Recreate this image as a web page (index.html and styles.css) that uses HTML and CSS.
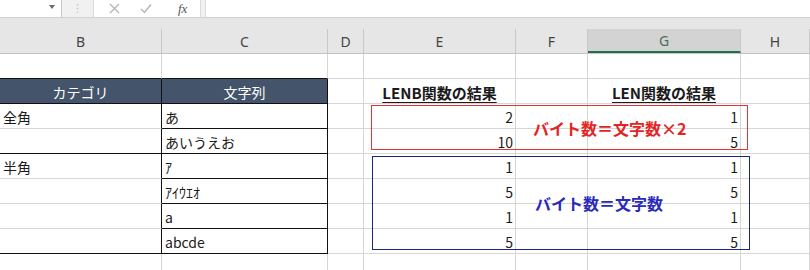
FILE: index.html
```html
<!DOCTYPE html>
<html lang="ja">
<head>
  <meta charset="UTF-8">
  <meta name="viewport" content="width=device-width, initial-scale=1.0">
  <title>LENB関数とLEN関数</title>
  <link rel="stylesheet" href="styles.css">
</head>
<body>
  <!-- Formula Bar -->
  <div class="formula-bar">
    <div class="name-box"><span class="drop"></span></div>
    <div class="grip"><span>⋮</span></div>
    <div class="fx-buttons">
      <svg class="icon" width="11" height="11" viewBox="0 0 11 11"><path d="M1 1 L10 10 M10 1 L1 10" stroke="#b4b4b4" stroke-width="1.3" fill="none"/></svg>
      <svg class="icon" width="12" height="11" viewBox="0 0 12 11"><path d="M1 6 L4.5 9.5 L11 1.5" stroke="#b4b4b4" stroke-width="1.4" fill="none"/></svg>
      <span class="fx">fx</span>
    </div>
    <div class="formula-input"></div>
  </div>

  <!-- Column Headers -->
  <div class="col-heads">
    <div class="col-head">B</div>
    <div class="col-head">C</div>
    <div class="col-head">D</div>
    <div class="col-head">E</div>
    <div class="col-head">F</div>
    <div class="col-head selected">G</div>
    <div class="col-head">H</div>
  </div>

  <!-- Sheet -->
  <div class="sheet">
    <!-- row 1 -->
    <div class="cell bb"></div>
    <div class="cell bb"></div>
    <div class="cell"></div>
    <div class="cell"></div>
    <div class="cell"></div>
    <div class="cell"></div>
    <div class="cell"></div>

    <!-- row 2: headers -->
    <div class="cell head bb br">カテゴリ</div>
    <div class="cell head bb br">文字列</div>
    <div class="cell"></div>
    <div class="cell title"><u>LENB関数の結果</u></div>
    <div class="cell"></div>
    <div class="cell title"><u>LEN関数の結果</u></div>
    <div class="cell"></div>

    <!-- row 3 -->
    <div class="cell br">全角</div>
    <div class="cell bb br">あ</div>
    <div class="cell"></div>
    <div class="cell num">2</div>
    <div class="cell"></div>
    <div class="cell num">1</div>
    <div class="cell"></div>

    <!-- row 4 -->
    <div class="cell bb br"></div>
    <div class="cell bb br">あいうえお</div>
    <div class="cell"></div>
    <div class="cell num">10</div>
    <div class="cell"></div>
    <div class="cell num">5</div>
    <div class="cell"></div>

    <!-- row 5 -->
    <div class="cell br">半角</div>
    <div class="cell bb br">ｱ</div>
    <div class="cell"></div>
    <div class="cell num">1</div>
    <div class="cell"></div>
    <div class="cell num">1</div>
    <div class="cell"></div>

    <!-- row 6 -->
    <div class="cell br"></div>
    <div class="cell bb br">ｱｲｳｴｵ</div>
    <div class="cell"></div>
    <div class="cell num">5</div>
    <div class="cell"></div>
    <div class="cell num">5</div>
    <div class="cell"></div>

    <!-- row 7 -->
    <div class="cell br"></div>
    <div class="cell bb br">a</div>
    <div class="cell"></div>
    <div class="cell num">1</div>
    <div class="cell"></div>
    <div class="cell num">1</div>
    <div class="cell"></div>

    <!-- row 8 -->
    <div class="cell bb br"></div>
    <div class="cell bb br">abcde</div>
    <div class="cell"></div>
    <div class="cell num">5</div>
    <div class="cell"></div>
    <div class="cell num">5</div>
    <div class="cell"></div>

    <!-- row 9 -->
    <div class="cell"></div>
    <div class="cell"></div>
    <div class="cell"></div>
    <div class="cell"></div>
    <div class="cell"></div>
    <div class="cell"></div>
    <div class="cell"></div>

    <!-- Callout boxes -->
    <div class="note note-red">バイト数＝文字数×2</div>
    <div class="note note-blue">バイト数＝文字数</div>
  </div>
</body>
</html>
```

FILE: styles.css
```css
/* Global */
* {
  box-sizing: border-box;
}

body {
  margin: 0;
  inline-size: 810px;
  block-size: 270px;
  overflow: hidden;
  background: #fff;
  color: #1a1a1a;
  font-family: "Noto Sans CJK JP", "Noto Sans", sans-serif;
}

/* Formula Bar */
.formula-bar {
  display: flex;
  block-size: 18px;
  background: #f1f1f1;
  border-block-end: 1px solid #d2d2d2;
}

.name-box {
  inline-size: 62px;
  background: #fff;
  border-inline-end: 1px solid #c9c9c9;
  position: relative;
}

.drop {
  position: absolute;
  inset-inline-start: 49px;
  inset-block-start: 5px;
  border-inline-start: 3.5px solid transparent;
  border-inline-end: 3.5px solid transparent;
  border-block-start: 4px solid #6a6a6a;
}

.grip {
  inline-size: 31px;
  display: flex;
  align-items: center;
  justify-content: center;
  color: #b8b8b8;
  font-family: "DejaVu Sans", sans-serif;
  font-size: 11px;
  line-height: 1;
}

.fx-buttons {
  inline-size: 108px;
  background: #fff;
  border-inline-start: 1px solid #dadada;
  border-inline-end: 1px solid #dadada;
  display: flex;
  align-items: center;
  padding-inline-start: 15px;
  gap: 20px;
}

.fx {
  font-family: "Liberation Serif", serif;
  font-style: italic;
  font-size: 13px;
  color: #555;
  margin-inline-start: 6px;
}

.formula-input {
  flex: 1;
  margin-inline-start: 4px;
  background: #fff;
  border-inline-start: 1px solid #dadada;
}

/* Column Headers */
.col-heads {
  display: grid;
  grid-template-columns: 162px 166px 36px 152px 72px 153px 1fr;
  padding-block-start: 11px;
  background: #e6e6e6;
  border-block-end: 1px solid #c4c4c4;
}

.col-head {
  block-size: 24px;
  border-inline-end: 1px solid #c8c8c8;
  font-family: "Noto Sans", sans-serif;
  font-size: 14px;
  color: #444;
  display: flex;
  align-items: center;
  justify-content: center;
}

.col-head.selected {
  background: #d3d3d3;
  color: #4a6e5a;
  border-block-end: 2px solid #217346;
}

/* Sheet */
.sheet {
  position: relative;
  display: grid;
  grid-template-columns: 162px 166px 36px 152px 72px 153px 1fr;
  grid-auto-rows: 25px;
}

.cell {
  border-inline-end: 1px solid #d6d6d6;
  border-block-end: 1px solid #d6d6d6;
  padding: 2px 3px 0;
  display: flex;
  align-items: center;
  font-size: 14px;
  line-height: 1;
  white-space: nowrap;
}

.cell.bb {
  border-block-end-color: #111;
}

.cell.br {
  border-inline-end-color: #111;
}

.cell.head {
  background: #44546a;
  color: #fff;
  justify-content: center;
}

.cell.num {
  justify-content: flex-end;
  padding-inline-end: 2px;
}

.cell.title {
  justify-content: center;
  font-weight: bold;
  font-size: 15px;
}

.title u {
  text-underline-offset: 3px;
}

/* Callouts */
.note {
  position: absolute;
  display: flex;
  align-items: center;
  font-size: 16px;
  font-weight: bold;
}

.note-red {
  inset-inline-start: 371px;
  inset-block-start: 51px;
  inline-size: 377px;
  block-size: 45px;
  padding-inline-start: 161px;
  border: 1px solid #e23434;
  color: #e42424;
}

.note-blue {
  inset-inline-start: 372px;
  inset-block-start: 102px;
  inline-size: 378px;
  block-size: 94px;
  padding-inline-start: 162px;
  border: 1px solid #1c2484;
  color: #2a2ab8;
}
```
